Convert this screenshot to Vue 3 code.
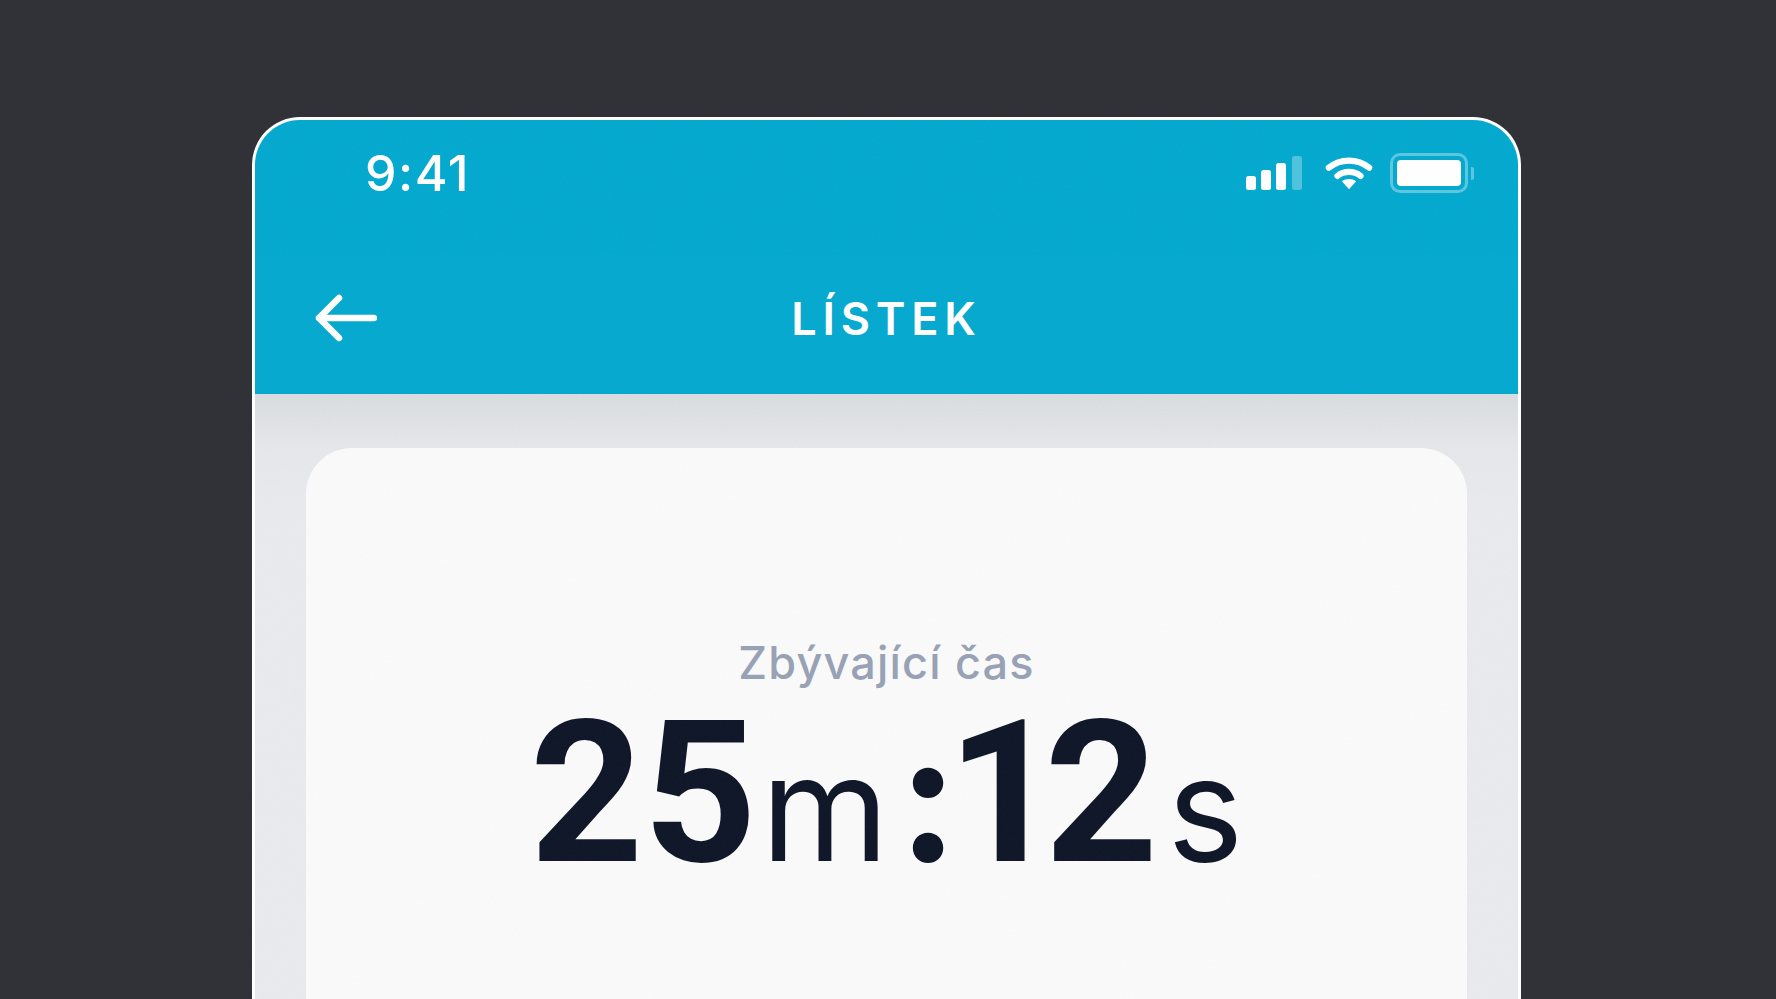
<template>
  <div class="page">
    <div class="phone">
      <header class="top">
        <div class="status">
          <span class="clock">9:41</span>
          <div class="status-icons">
            <svg class="signal" width="56" height="34" viewBox="0 0 56 34">
              <rect x="0" y="20" width="10" height="14" rx="2.5" fill="#fff" />
              <rect x="15" y="14" width="10" height="20" rx="2.5" fill="#fff" />
              <rect x="30" y="7" width="10" height="27" rx="2.5" fill="#fff" />
              <rect x="46" y="0" width="10" height="34" rx="2.5" fill="#fff" opacity="0.3" />
            </svg>
            <svg class="wifi" width="48" height="34" viewBox="0 0 50 34">
              <path d="M4 11.5C16 1.5 34 1.5 46 11.5" fill="none" stroke="#fff" stroke-width="6.5" stroke-linecap="round" />
              <path d="M13 20C20 14.5 30 14.5 37 20" fill="none" stroke="#fff" stroke-width="6.5" stroke-linecap="round" />
              <path d="M17.5 25.5C22 22.5 28 22.5 32.5 25.5L25 34Z" fill="#fff" />
            </svg>
            <div class="battery">
              <div class="battery-body"><div class="battery-fill"></div></div>
              <div class="battery-cap"></div>
            </div>
          </div>
        </div>
        <div class="nav">
          <svg class="back" width="62" height="50" viewBox="0 0 62 50">
            <path d="M59 25H4M24 5L4 25L24 45" fill="none" stroke="#fff" stroke-width="6.5" stroke-linecap="round" stroke-linejoin="round" />
          </svg>
          <h1 class="title">LÍSTEK</h1>
        </div>
      </header>
      <main class="content">
        <section class="card">
          <div class="label">{{ label }}</div>
          <div class="timer">
            <b>{{ minutes }}</b><span class="unit">m</span><b class="colon">:</b><b class="secs">{{ seconds }}</b><span class="unit unit-s">s</span>
          </div>
        </section>
      </main>
      <!-- jemne zrno pres celou obrazovku -->
      <svg class="grain" width="100%" height="100%">
        <filter id="grain-noise">
          <feTurbulence type="fractalNoise" baseFrequency="0.9" numOctaves="2" />
          <feColorMatrix values="0 0 0 0 0.5  0 0 0 0 0.5  0 0 0 0 0.5  0 0 0 1.2 -0.2" />
        </filter>
        <rect width="100%" height="100%" filter="url(#grain-noise)" />
      </svg>
    </div>
  </div>
</template>

<script setup>
const label = 'Zbývající čas'
const minutes = 25
const seconds = 12
</script>

<style>
html, body {
  margin: 0;
  background: #313238;
  overflow: hidden;
}
</style>

<style scoped>
.page {
  height: 999px;
  padding: 117px 255px 0 252px;
  box-sizing: border-box;
  overflow: hidden;
  font-family: Inter, "Liberation Sans", sans-serif;
}

.phone {
  position: relative;
  height: 1000px;
  border: 3px solid #fff;
  border-bottom: 0;
  border-radius: 48px 48px 0 0;
  background: #e9eaee;
  overflow: hidden;
}

.grain {
  position: absolute;
  top: 0;
  left: 0;
  opacity: 0.03;
  pointer-events: none;
}

.top {
  background: #05a9cf;
  height: 274px;
}

.status {
  display: flex;
  justify-content: space-between;
  align-items: center;
  padding: 22px 44px 0 110px;
  height: 62px;
}

.clock {
  color: #fff;
  font-size: 50px;
  font-weight: 500;
  letter-spacing: 1.5px;
  line-height: 60px;
}

.status-icons {
  display: flex;
  align-items: center;
}

.signal {
  margin-right: 23px;
}

.wifi {
  margin-right: 17px;
}

.battery {
  display: flex;
  align-items: center;
  gap: 3px;
}

.battery-body {
  width: 78px;
  height: 40px;
  box-sizing: border-box;
  border: 3px solid rgba(255, 255, 255, 0.35);
  border-radius: 10px;
  padding: 4px;
}

.battery-fill {
  height: 100%;
  background: #fff;
  border-radius: 4px;
}

.battery-cap {
  width: 3px;
  height: 13px;
  border-radius: 0 2px 2px 0;
  background: rgba(255, 255, 255, 0.35);
}

.nav {
  position: relative;
  display: flex;
  justify-content: center;
  align-items: center;
  margin-top: 72px;
  height: 86px;
}

.back {
  position: absolute;
  left: 60px;
  top: 17px;
}

.title {
  margin: 0;
  color: #fff;
  font-size: 45px;
  font-weight: 600;
  letter-spacing: 5.8px;
  line-height: 60px;
}

.content {
  padding: 54px 51px 0;
  background: linear-gradient(#d9dcdf, #e5e7eb 54px, #e9eaee 120px);
}

.card {
  height: 700px;
  padding-top: 185px;
  box-sizing: border-box;
  background: #fafafb;
  border-radius: 46px 46px 0 0;
  text-align: center;
}

.label {
  color: #98a2b5;
  font-size: 45px;
  font-weight: 500;
  letter-spacing: 1.2px;
  line-height: 60px;
}

.timer {
  display: flex;
  justify-content: center;
  align-items: baseline;
  color: #0f1628;
  font-size: 198px;
  line-height: 200px;
}

.timer b {
  font-family: Roboto, "Liberation Sans", sans-serif;
  font-weight: 700;
}

.timer .colon {
  font-family: Inter, "Liberation Sans", sans-serif;
  margin-left: 9px;
  margin-right: -11px;
  font-size: 180px;
}

.timer .secs {
  letter-spacing: -16px;
}

.unit {
  font-size: 146px;
  font-weight: 400;
  margin-left: 4px;
}

.unit-s {
  font-size: 144px;
  margin-left: 25px;
}
</style>
